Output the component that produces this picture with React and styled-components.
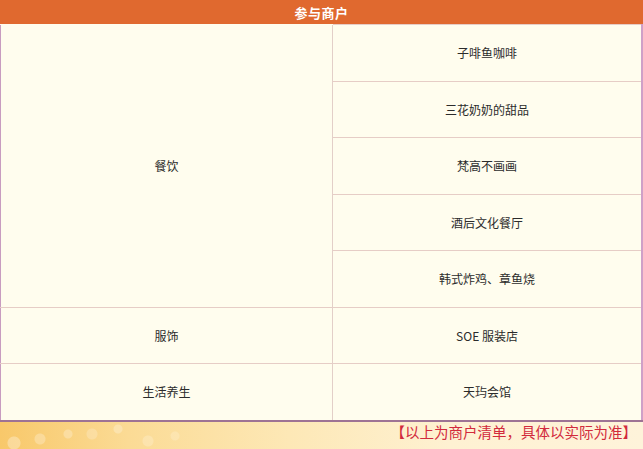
import React from "react";
import styled, { createGlobalStyle } from "styled-components";

const GlobalStyle = createGlobalStyle`
  html, body {
    margin: 0;
    padding: 0;
    background: #fffdee;
  }
  body {
    font-family: "Noto Sans CJK SC", "Noto Sans", sans-serif;
  }
`;

const Page = styled.div`
  width: 643px;
  height: 449px;
  display: flex;
  flex-direction: column;
  overflow: hidden;
`;

const Header = styled.div`
  height: 24px;
  background: #e0692f;
  color: #fff;
  font-size: 13px;
  font-weight: 700;
  display: flex;
  align-items: center;
  justify-content: center;
  letter-spacing: 0.5px;
`;

const Table = styled.table`
  width: 643px;
  border-collapse: collapse;
  background: #fffdee;
  table-layout: fixed;
  border-left: 1px solid #c89cc0;
  border-right: 2px solid #cfa0c8;
  border-bottom: 2px solid #9e7394;
`;

const Cell = styled.td`
  height: 55.5px;
  padding: 0;
  text-align: center;
  vertical-align: middle;
  font-size: 12px;
  color: #2b2b2b;
  border-top: 1px solid #e6cdc6;
  border-left: ${(p) => (p.$right ? "1px solid #e3cfc8" : "none")};
  &:first-child {
    border-top-color: ${(p) => (p.$first ? "transparent" : "#e6cdc6")};
  }
`;

const Footer = styled.div`
  flex: 1;
  display: flex;
  justify-content: flex-end;
  align-items: flex-start;
  padding: 0 6px 0 0;
  line-height: 20px;
  font-size: 14.5px;
  color: #d22a3c;
  background:
    radial-gradient(circle at 14px 21px, rgba(255,255,255,0.3) 0 6px, transparent 7px),
    radial-gradient(circle at 40px 17px, rgba(255,255,255,0.25) 0 5px, transparent 6px),
    radial-gradient(circle at 68px 12px, rgba(255,255,255,0.25) 0 4px, transparent 5px),
    radial-gradient(circle at 92px 12px, rgba(255,255,255,0.2) 0 5px, transparent 6px),
    radial-gradient(circle at 118px 7px, rgba(255,255,255,0.25) 0 4px, transparent 5px),
    radial-gradient(circle at 148px 19px, rgba(255,255,255,0.2) 0 5px, transparent 6px),
    radial-gradient(circle at 175px 14px, rgba(255,255,255,0.18) 0 4px, transparent 5px),
    linear-gradient(90deg, #f8c86a 0%, #fbdb95 20%, #fde8b6 45%, #fef1d2 70%, #fef3da 100%);
`;

const rows = [
  { cat: "餐饮", shops: ["子啡鱼咖啡", "三花奶奶的甜品", "梵高不画画", "酒后文化餐厅", "韩式炸鸡、章鱼烧"] },
  { cat: "服饰", shops: ["SOE 服装店"] },
  { cat: "生活养生", shops: ["天玙会馆"] },
];

export default function App() {
  let index = 0;
  return (
    <Page>
      <GlobalStyle />
      <Header>参与商户</Header>
      <Table>
        <colgroup>
          <col style={{ width: 332 }} />
          <col />
        </colgroup>
        <tbody>
          {rows.map((r) =>
            r.shops.map((s, i) => {
              const first = index === 0;
              index += 1;
              return (
                <tr key={s}>
                  {i === 0 && (
                    <Cell rowSpan={r.shops.length} $first={first}>
                      {r.cat}
                    </Cell>
                  )}
                  <Cell $right $first={first}>{s}</Cell>
                </tr>
              );
            })
          )}
        </tbody>
      </Table>
      <Footer>【以上为商户清单，具体以实际为准】</Footer>
    </Page>
  );
}
